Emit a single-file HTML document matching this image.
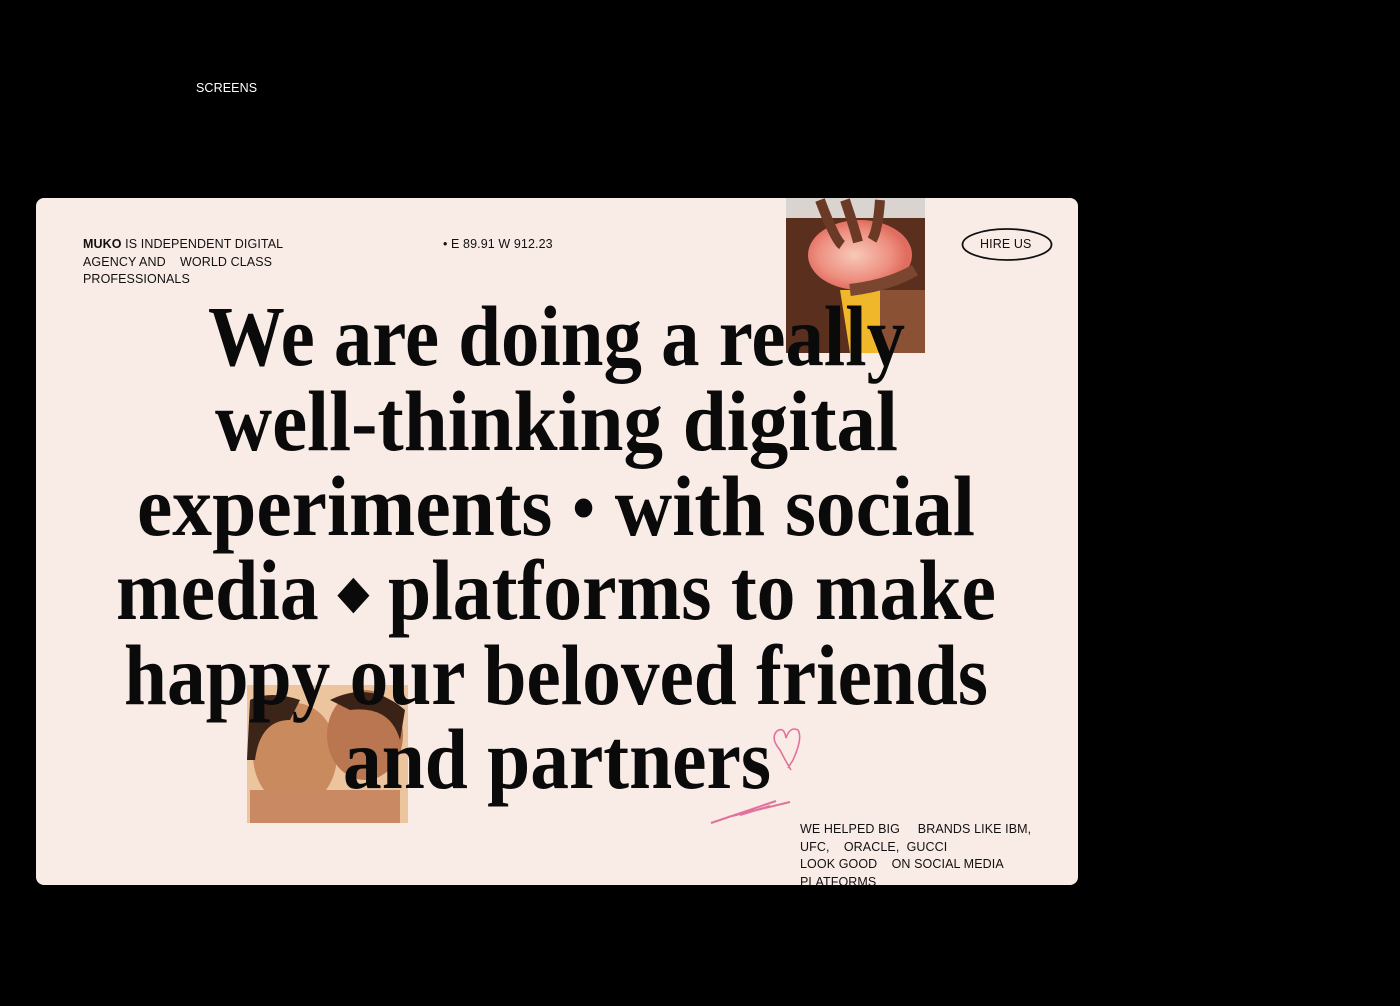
<!DOCTYPE html>
<html><head><meta charset="utf-8"><style>
html,body{margin:0;padding:0;background:#000;width:1400px;height:1006px;overflow:hidden;font-family:"Liberation Sans",Arial,sans-serif}
.t{position:absolute;font-size:12.5px;color:#111;line-height:17.5px;letter-spacing:0.1px}
</style></head><body>
<div class="t" style="left:196px;top:80px;color:#fff;font-size:12.5px">SCREENS</div>
<div style="position:absolute;left:36px;top:198px;width:1042px;height:687px;background:#f9ece7;border-radius:8px;overflow:hidden"></div>
<svg width="1400" height="1006" style="position:absolute;left:0;top:0">
<defs>
<clipPath id="c"><rect x="36" y="198" width="1042" height="687" rx="8"/></clipPath>
<radialGradient id="g1" cx="0.45" cy="0.5" r="0.5"><stop offset="0" stop-color="#f7c9b8"/><stop offset="0.7" stop-color="#ee8f80"/><stop offset="1" stop-color="#e06d5f"/></radialGradient>
</defs>
<g clip-path="url(#c)">
<rect x="786" y="198" width="139" height="155" fill="#5a2f1e"/>
<rect x="786" y="198" width="139" height="20" fill="#d9d4d0"/>
<polygon points="840,290 910,290 905,353 850,353" fill="#f1b72a"/>
<rect x="880" y="290" width="45" height="63" fill="#8a5134"/>
<ellipse cx="860" cy="255" rx="52" ry="35" fill="url(#g1)"/>
<path d="M820 200 Q835 240 842 245 M845 200 Q855 230 858 242 M880 200 Q878 230 872 240" stroke="#6b3a26" stroke-width="10" fill="none"/>
<path d="M850 290 Q890 285 915 270" stroke="#7b4630" stroke-width="12" fill="none"/>
<rect x="247" y="685" width="161" height="138" fill="#ecc59f"/>
<ellipse cx="295" cy="755" rx="42" ry="52" fill="#c98a5e"/>
<path d="M250 700 Q270 690 300 700 L290 720 Q260 720 255 760 L247 760Z" fill="#3b2418"/>
<ellipse cx="365" cy="735" rx="38" ry="45" fill="#b97650"/>
<path d="M330 700 Q370 680 405 710 L400 740 Q390 705 350 710Z" fill="#3a2216"/>
<rect x="250" y="790" width="150" height="33" fill="#c98963"/>
<g font-family="'Liberation Serif',serif" font-weight="bold" font-size="86" fill="#0a0a0a">
<text x="208" y="365" textLength="697" lengthAdjust="spacingAndGlyphs">We are doing a really</text>
<text x="215" y="450" textLength="683" lengthAdjust="spacingAndGlyphs">well-thinking digital</text>
<text x="137" y="535" textLength="838" lengthAdjust="spacingAndGlyphs">experiments <tspan font-size="70" dy="-4">•</tspan><tspan dy="4"> with social</tspan></text>
<text x="116" y="619" textLength="880" lengthAdjust="spacingAndGlyphs">media <tspan font-size="44" dy="-12">◆</tspan><tspan dy="12"> platforms to make</tspan></text>
<text x="124" y="704" textLength="864" lengthAdjust="spacingAndGlyphs">happy our beloved friends</text>
<text x="343" y="788" textLength="428" lengthAdjust="spacingAndGlyphs">and partners</text>
</g>
<path d="M791 770 Q785 760 780 750 Q770 738 777 731 Q784 726 786 738 Q790 726 798 730 Q803 738 793 760 L788 768" stroke="#e2719c" stroke-width="1.6" fill="none"/>
<path d="M711 823 L776 801 M728 817 L790 802 M740 815 L770 806" stroke="#e2719c" stroke-width="2" fill="none"/>
<ellipse cx="1007" cy="244.5" rx="44.5" ry="15.5" fill="none" stroke="#111" stroke-width="1.8"/>
</g>
</svg>
<div class="t" style="left:83px;top:236px"><b>MUKO</b> IS INDEPENDENT DIGITAL<br>AGENCY AND &nbsp;&nbsp;&nbsp;WORLD CLASS<br>PROFESSIONALS</div>
<div class="t" style="left:443px;top:236px">• E 89.91 W 912.23</div>
<div class="t" style="left:980px;top:236px">HIRE US</div>
<div style="position:absolute;left:36px;top:198px;width:1042px;height:687px;overflow:hidden;border-radius:8px;pointer-events:none">
<div class="t" style="left:764px;top:623px">WE HELPED BIG &nbsp;&nbsp;&nbsp;&nbsp;BRANDS LIKE IBM,<br>UFC, &nbsp;&nbsp;&nbsp;ORACLE, &nbsp;GUCCI<br>LOOK GOOD &nbsp;&nbsp;&nbsp;ON SOCIAL MEDIA<br>PLATFORMS</div>
</div>
</body></html>
